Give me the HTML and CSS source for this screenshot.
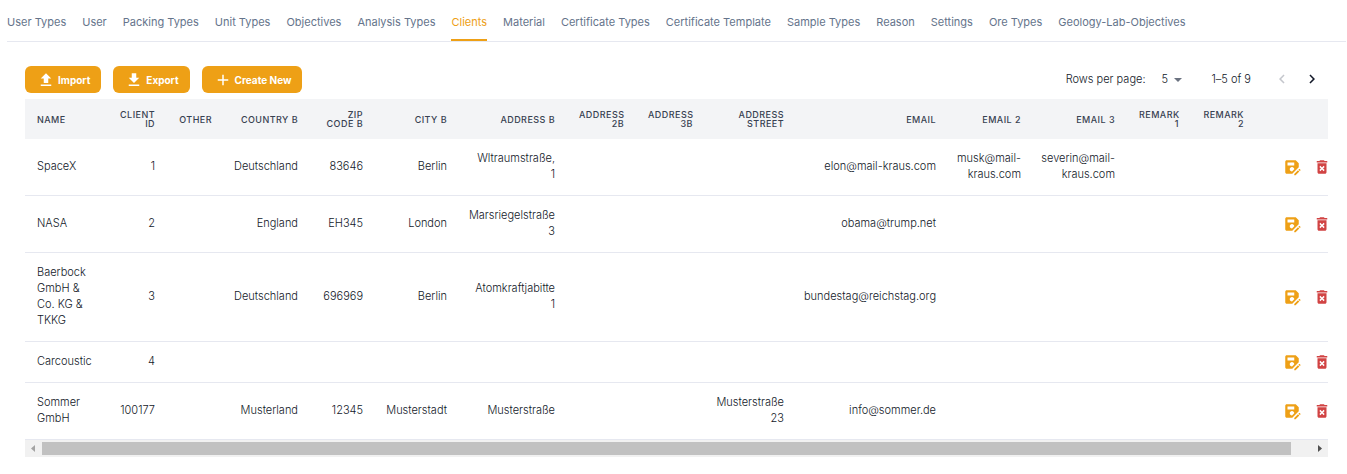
FILE: index.html
```
<!DOCTYPE html>
<html lang="en">
<head>
<meta charset="utf-8">
<title>Clients</title>
<link rel="stylesheet" href="styles.css">
</head>
<body>
<svg class="sprite" aria-hidden="true">
  <symbol id="i-save" viewBox="0 0 24 24"><path d="M21 12.4V7l-4-4H5c-1.11 0-2 .9-2 2v14c0 1.100.89 2 2 2h7.400zM15 15c0 .02 0 .03-.01.050l-2.940 2.950H12c-1.660 0-3-1.340-3-3s1.340-3 3-3 3 1.340 3 3M6 6h9v4H6zm13.990 10.250 1.770 1.770L16.770 23H15v-1.770zm3.260.260-.850.850-1.770-1.770.850-.850c.2-.2.510-.2.710 0l1.060 1.060c.2.2.2.520 0 .710"/></symbol>
  <symbol id="i-delete" viewBox="0 0 24 24"><path d="M6 19c0 1.100.9 2 2 2h8c1.100 0 2-.9 2-2V7H6zm2.460-7.120 1.410-1.410L12 12.590l2.120-2.120 1.410 1.410L13.410 14l2.120 2.120-1.410 1.410L12 15.410l-2.120 2.120-1.410-1.410L10.590 14zM15.500 4l-1-1h-5l-1 1H5v2h14V4z"/></symbol>
</svg>

<main class="page">
  <div class="tabs" role="tablist">
    <button class="tab" role="tab">User Types</button>
    <button class="tab" role="tab">User</button>
    <button class="tab" role="tab">Packing Types</button>
    <button class="tab" role="tab">Unit Types</button>
    <button class="tab" role="tab">Objectives</button>
    <button class="tab" role="tab">Analysis Types</button>
    <button class="tab tab-active" role="tab" aria-selected="true">Clients</button>
    <button class="tab" role="tab">Material</button>
    <button class="tab" role="tab">Certificate Types</button>
    <button class="tab" role="tab">Certificate Template</button>
    <button class="tab" role="tab">Sample Types</button>
    <button class="tab" role="tab">Reason</button>
    <button class="tab" role="tab">Settings</button>
    <button class="tab" role="tab">Ore Types</button>
    <button class="tab" role="tab">Geology-Lab-Objectives</button>
  </div>

  <section class="panel">
    <div class="toolbar">
      <div class="actions">
        <button class="btn"><svg class="btn-icon" viewBox="0 0 24 24"><path d="M9 16h6v-6h4l-7-7-7 7h4zm-4 2h14v2H5z"/></svg>Import</button>
        <button class="btn"><svg class="btn-icon" viewBox="0 0 24 24"><path d="M19 9h-4V3H9v6H5l7 7zM5 18v2h14v-2z"/></svg>Export</button>
        <button class="btn"><svg class="btn-icon" viewBox="0 0 24 24"><path d="M19 13h-6v6h-2v-6H5v-2h6V5h2v6h6z"/></svg>Create New</button>
      </div>
      <div class="pagination">
        <label for="rows">Rows per page:</label>
        <div class="select-wrap">
          <select id="rows" class="select"><option>5</option><option>10</option><option>25</option></select>
          <svg class="select-arrow" viewBox="0 0 8 4"><path d="M0 0h8L4 4z"/></svg>
        </div>
        <span class="range">1–5 of 9</span>
        <button class="page-btn" aria-label="Previous page" disabled><svg viewBox="0 0 24 24"><path d="M15.410 7.410 14 6l-6 6 6 6 1.410-1.410L10.830 12z"/></svg></button>
        <button class="page-btn" aria-label="Next page"><svg viewBox="0 0 24 24"><path d="M10 6 8.590 7.410 13.170 12l-4.580 4.590L10 18l6-6z"/></svg></button>
      </div>
    </div>

    <div class="table-scroll">
      <table class="table">
        <colgroup>
          <col class="w78"><col class="w64"><col class="w57"><col class="w86"><col class="w65"><col class="w84"><col class="w108"><col class="w69"><col class="w69"><col class="w91"><col class="w152"><col class="w85"><col class="w94"><col class="w64"><col class="w65"><col class="w93">
        </colgroup>
        <thead>
          <tr><th>Name</th><th>Client ID</th><th>Other</th><th>Country B</th><th>Zip Code B</th><th>City B</th><th>Address B</th><th>Address 2B</th><th>Address 3B</th><th>Address Street</th><th>Email</th><th>Email 2</th><th>Email 3</th><th>Remark 1</th><th>Remark 2</th><th></th></tr>
        </thead>
        <tbody>
          <tr><td>SpaceX</td><td>1</td><td></td><td>Deutschland</td><td>83646</td><td>Berlin</td><td>Wltraumstraße,<br>1</td><td></td><td></td><td></td><td>elon@mail-kraus.com</td><td>musk@mail-kraus.com</td><td>severin@mail-kraus.com</td><td></td><td></td><td class="row-cell"><div class="row-actions"><button class="icon-btn save" aria-label="Save"><svg><use href="#i-save"/></svg></button><button class="icon-btn delete" aria-label="Delete"><svg><use href="#i-delete"/></svg></button></div></td></tr>
          <tr><td>NASA</td><td>2</td><td></td><td>England</td><td>EH345</td><td>London</td><td>Marsriegelstraße<br>3</td><td></td><td></td><td></td><td>obama@trump.net</td><td></td><td></td><td></td><td></td><td class="row-cell"><div class="row-actions"><button class="icon-btn save" aria-label="Save"><svg><use href="#i-save"/></svg></button><button class="icon-btn delete" aria-label="Delete"><svg><use href="#i-delete"/></svg></button></div></td></tr>
          <tr><td>Baerbock GmbH &amp; Co. KG &amp; TKKG</td><td>3</td><td></td><td>Deutschland</td><td>696969</td><td>Berlin</td><td>Atomkraftjabitte<br>1</td><td></td><td></td><td></td><td>bundestag@reichstag.org</td><td></td><td></td><td></td><td></td><td class="row-cell"><div class="row-actions"><button class="icon-btn save" aria-label="Save"><svg><use href="#i-save"/></svg></button><button class="icon-btn delete" aria-label="Delete"><svg><use href="#i-delete"/></svg></button></div></td></tr>
          <tr><td>Carcoustic</td><td>4</td><td></td><td></td><td></td><td></td><td></td><td></td><td></td><td></td><td></td><td></td><td></td><td></td><td></td><td class="row-cell"><div class="row-actions"><button class="icon-btn save" aria-label="Save"><svg><use href="#i-save"/></svg></button><button class="icon-btn delete" aria-label="Delete"><svg><use href="#i-delete"/></svg></button></div></td></tr>
          <tr><td>Sommer GmbH</td><td>100177</td><td></td><td>Musterland</td><td>12345</td><td>Musterstadt</td><td>Musterstraße</td><td></td><td></td><td>Musterstraße<br>23</td><td>info@sommer.de</td><td></td><td></td><td></td><td></td><td class="row-cell"><div class="row-actions"><button class="icon-btn save" aria-label="Save"><svg><use href="#i-save"/></svg></button><button class="icon-btn delete" aria-label="Delete"><svg><use href="#i-delete"/></svg></button></div></td></tr>
        </tbody>
      </table>
    </div>
    <div class="scrollbar" aria-hidden="true">
      <svg class="scroll-arrow scroll-left" viewBox="0 0 17 17"><path d="M10 5v7L6 8.500z"/></svg>
      <div class="scroll-track"><div class="scroll-thumb"></div></div>
      <svg class="scroll-arrow" viewBox="0 0 17 17"><path d="M7 5v7l4-3.500z"/></svg>
    </div>
  </section>
</main>
</body>
</html>
```
FILE: styles.css
```
* { box-sizing: border-box; }

body {
  margin: 0;
  background: #fff;
  color: #121828;
  font-family: Inter, "Liberation Sans", sans-serif;
  font-size: 11px;
  font-weight: 300;
  line-height: 16px;
}

button, select {
  font: inherit;
  color: inherit;
  background: none;
  border: 0;
  padding: 0;
  margin: 0;
  cursor: pointer;
}

svg { display: block; fill: currentColor; }
.sprite { display: none; }

.tabs {
  display: flex;
  gap: 16px;
  height: 42px;
  margin: 0 1px 0 7px;
  border-bottom: 1px solid #e6e8f0;
}

.tab {
  color: #65748b;
  font-weight: 400;
  white-space: nowrap;
  padding-top: 4px;
  border-bottom: 2px solid transparent;
}

.tab-active { color: #eea016; border-bottom-color: #eea016; }

.panel { padding: 24px 19px 0 25px; }

.toolbar {
  display: flex;
  justify-content: space-between;
  align-items: center;
  padding-bottom: 6px;
}

.actions { display: flex; gap: 12px; }

.btn {
  display: flex;
  align-items: center;
  gap: 3px;
  height: 27px;
  padding: 0 11px 0 12px;
  border-radius: 6px;
  background: #eea016;
  color: #fff;
  font-size: 10px;
  font-weight: 700;
}

.btn-icon { width: 18px; height: 18px; }

.pagination { display: flex; align-items: center; padding: 0 1px 2px 0; }
.select-wrap { position: relative; margin: 0 30px 0 16px; }
.select { appearance: none; width: 20px; height: 16px; }

.select-arrow {
  position: absolute;
  right: 0;
  top: 7px;
  width: 8px;
  height: 4px;
  color: #6b7280;
  pointer-events: none;
}

.range { margin-right: 16px; }
.page-btn { width: 30px; height: 24px; display: grid; place-items: center; }
.page-btn svg { width: 18px; height: 18px; }
.page-btn:disabled { color: #c4c6cc; cursor: default; }

.table-scroll { overflow-x: auto; scrollbar-width: none; }

.table {
  table-layout: fixed;
  width: calc(100% + 21px);
  border-collapse: separate;
  border-spacing: 0;
}

.w57 { width: 57px; }
.w64 { width: 64px; }
.w65 { width: 65px; }
.w69 { width: 69px; }
.w78 { width: 78px; }
.w84 { width: 84px; }
.w85 { width: 85px; }
.w86 { width: 86px; }
.w91 { width: 91px; }
.w93 { width: 93px; }
.w94 { width: 94px; }
.w108 { width: 108px; }
.w152 { width: 152px; }

th, td { text-align: right; vertical-align: middle; }

th {
  height: 40px;
  padding: 0 12px;
  background: #f3f4f6;
  color: #374151;
  font-size: 9px;
  font-weight: 500;
  line-height: 9px;
  letter-spacing: 0.05em;
  text-transform: uppercase;
}

td { padding: 11px 12px 13px 8px; border-bottom: 1px solid #e6e8f0; }

th:first-child, td:first-child { text-align: left; padding-left: 12px; }

.row-cell { padding: 0 0 0 27px; }
.row-actions { display: flex; gap: 12px; }
.icon-btn svg { width: 18px; height: 18px; }
.save { color: #eea016; }
.delete { color: #d14343; }

.scrollbar { display: flex; height: 17px; background: #f1f1f1; }
.scroll-arrow { width: 17px; height: 17px; color: #505050; }
.scroll-left { color: #a3a3a3; }
.scroll-track { flex: 1; padding: 2px 0; }
.scroll-thumb { width: 98.4%; height: 13px; background: #c1c1c1; }
```
